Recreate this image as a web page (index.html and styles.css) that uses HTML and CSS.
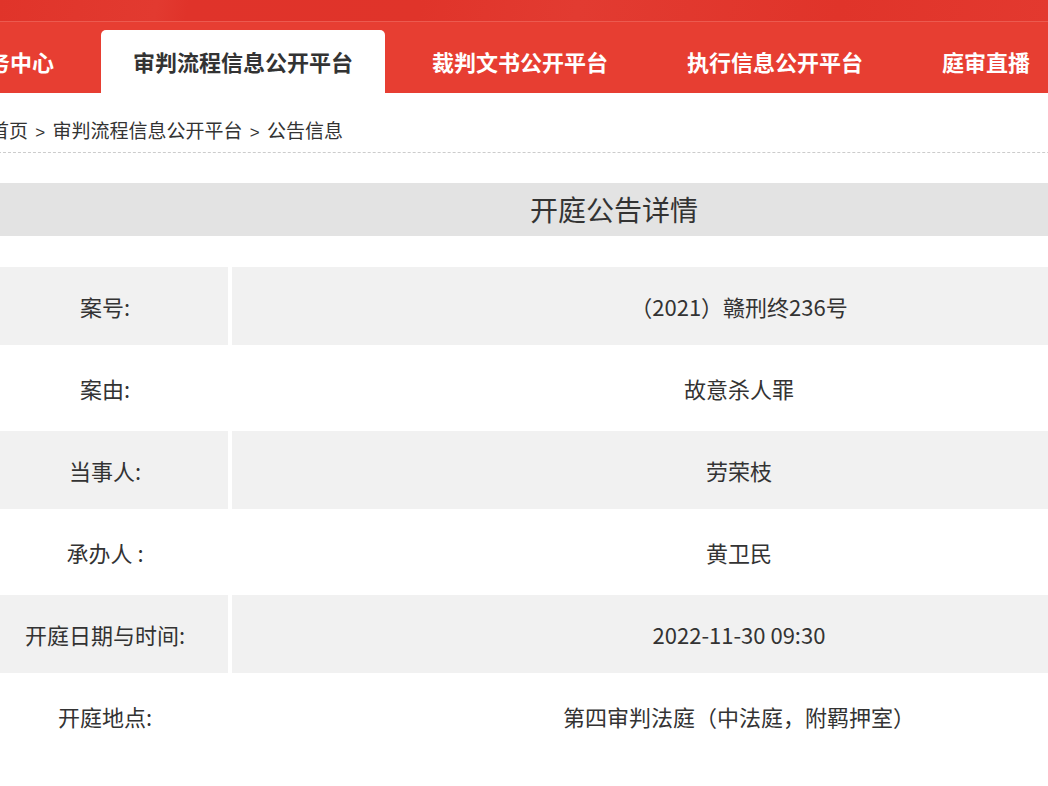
FILE: index.html
```html
<!DOCTYPE html>
<html lang="zh-CN">
<head>
  <meta charset="UTF-8">
  <title>开庭公告详情</title>
  <link rel="stylesheet" href="styles.css">
</head>
<body>
  <div class="top-strip"></div>
  <nav class="main-nav">
    <ul>
      <li><a href="#">诉讼服务中心</a></li>
      <li class="active"><a href="#">审判流程信息公开平台</a></li>
      <li><a href="#">裁判文书公开平台</a></li>
      <li><a href="#">执行信息公开平台</a></li>
      <li><a href="#">庭审直播</a></li>
    </ul>
  </nav>

  <div class="container">
    <div class="breadcrumb">
      <a href="#">首页</a> <span class="sep">&gt;</span>
      <a href="#">审判流程信息公开平台</a> <span class="sep">&gt;</span>
      <span>公告信息</span>
    </div>

    <h2 class="detail-title">开庭公告详情</h2>

    <table class="detail-table">
      <tr class="odd">
        <td class="label">案号:</td>
        <td class="value">（2021）赣刑终236号</td>
      </tr>
      <tr>
        <td class="label">案由:</td>
        <td class="value">故意杀人罪</td>
      </tr>
      <tr class="odd">
        <td class="label">当事人:</td>
        <td class="value">劳荣枝</td>
      </tr>
      <tr>
        <td class="label">承办人 :</td>
        <td class="value">黄卫民</td>
      </tr>
      <tr class="odd">
        <td class="label">开庭日期与时间:</td>
        <td class="value">2022-11-30 09:30</td>
      </tr>
      <tr>
        <td class="label">开庭地点:</td>
        <td class="value">第四审判法庭（中法庭，附羁押室）</td>
      </tr>
    </table>
  </div>
</body>
</html>
```

FILE: styles.css
```css
html, body {
  overflow: hidden;
}

body {
  margin: 0;
  padding: 0;
  font-family: "Microsoft YaHei", "Noto Sans CJK SC", "Noto Sans", sans-serif;
  color: #333;
  background: #fff;
}

a {
  color: inherit;
  text-decoration: none;
}

.top-strip {
  height: 21px;
  background: linear-gradient(100deg, #e0342a 0%, #e23a30 15%, #e0332a 18%, #e0342a 40%, #e23b31 55%, #e0342a 80%, #e3392f 100%);
  border-bottom: 1px solid #ec5a4f;
}

.main-nav {
  background: #e73e32;
  height: 71px;
}

.main-nav ul {
  list-style: none;
  margin: 0 0 0 -110px;
  padding: 8px 0 0;
  display: flex;
  white-space: nowrap;
}

.main-nav li {
  padding: 0 32px;
  margin-right: 15px;
  height: 63px;
  line-height: 62px;
  font-size: 22px;
  font-weight: bold;
  color: #fff;
  border-radius: 5px 5px 0 0;
}

.main-nav li.active {
  background: #fff;
  color: #333;
}

.container {
  width: 1272px;
  margin-left: -22px;
}

.breadcrumb {
  padding: 24px 0 6px 12px;
  line-height: 26px;
  font-size: 19px;
  color: #333;
  border-bottom: 1px dashed #ccc;
}

.breadcrumb .sep {
  margin: 0 3px;
  font-family: "Liberation Sans", sans-serif;
  font-size: 17px;
}

.detail-title {
  margin: 30px 0 0;
  height: 53px;
  line-height: 53px;
  background: #e3e3e3;
  text-align: center;
  font-size: 28px;
  font-weight: normal;
  color: #333;
}

.detail-table {
  margin-top: 27px;
  width: 100%;
  border-spacing: 4px;
  font-size: 22px;
}

.detail-table td {
  height: 78px;
  padding: 0;
  text-align: center;
  vertical-align: middle;
}

.detail-table td.label {
  width: 246px;
}

.detail-table tr.odd td {
  background: #f1f1f1;
}
```
